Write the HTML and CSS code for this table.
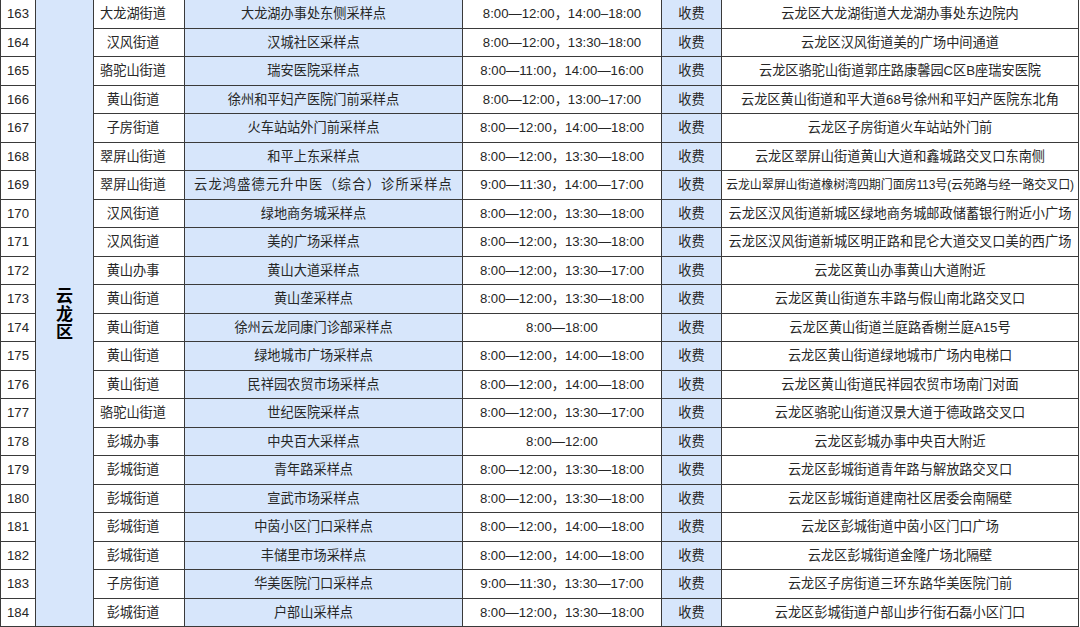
FILE: index.html
```html
<!DOCTYPE html>
<html lang="zh-CN">
<head>
<meta charset="utf-8">
<title>云龙区采样点</title>
<link rel="stylesheet" href="styles.css">
</head>
<body>
<div class="sheet">
  <div class="district"><span class="vtext">云龙区</span></div>

  <div class="c num">163</div><div class="c street">大龙湖街道</div><div class="c point">大龙湖办事处东侧采样点</div><div class="c time">8:00—12:00，14:00–18:00</div><div class="c fee">收费</div><div class="c addr">云龙区大龙湖街道大龙湖办事处东边院内</div>
  <div class="c num">164</div><div class="c street">汉风街道</div><div class="c point">汉城社区采样点</div><div class="c time">8:00—12:00，13:30–18:00</div><div class="c fee">收费</div><div class="c addr">云龙区汉风街道美的广场中间通道</div>
  <div class="c num">165</div><div class="c street">骆驼山街道</div><div class="c point">瑞安医院采样点</div><div class="c time">8:00—11:00，14:00—16:00</div><div class="c fee">收费</div><div class="c addr">云龙区骆驼山街道郭庄路康馨园C区B座瑞安医院</div>
  <div class="c num">166</div><div class="c street">黄山街道</div><div class="c point">徐州和平妇产医院门前采样点</div><div class="c time">8:00—12:00，13:00–17:00</div><div class="c fee">收费</div><div class="c addr">云龙区黄山街道和平大道68号徐州和平妇产医院东北角</div>
  <div class="c num">167</div><div class="c street">子房街道</div><div class="c point">火车站站外门前采样点</div><div class="c time">8:00—12:00，14:00—18:00</div><div class="c fee">收费</div><div class="c addr">云龙区子房街道火车站站外门前</div>
  <div class="c num">168</div><div class="c street">翠屏山街道</div><div class="c point">和平上东采样点</div><div class="c time">8:00—12:00，13:30—18:00</div><div class="c fee">收费</div><div class="c addr">云龙区翠屏山街道黄山大道和鑫城路交叉口东南侧</div>
  <div class="c num">169</div><div class="c street">翠屏山街道</div><div class="c point wide">云龙鸿盛德元升中医（综合）诊所采样点</div><div class="c time">9:00—11:30，14:00—17:00</div><div class="c fee">收费</div><div class="c addr tight">云龙山翠屏山街道橡树湾四期门面房113号(云苑路与经一路交叉口)</div>
  <div class="c num">170</div><div class="c street">汉风街道</div><div class="c point">绿地商务城采样点</div><div class="c time">8:00—12:00，13:30—18:00</div><div class="c fee">收费</div><div class="c addr">云龙区汉风街道新城区绿地商务城邮政储蓄银行附近小广场</div>
  <div class="c num">171</div><div class="c street">汉风街道</div><div class="c point">美的广场采样点</div><div class="c time">8:00—12:00，13:30—18:00</div><div class="c fee">收费</div><div class="c addr">云龙区汉风街道新城区明正路和昆仑大道交叉口美的西广场</div>
  <div class="c num">172</div><div class="c street">黄山办事</div><div class="c point">黄山大道采样点</div><div class="c time">8:00—12:00，13:30—17:00</div><div class="c fee">收费</div><div class="c addr">云龙区黄山办事黄山大道附近</div>
  <div class="c num">173</div><div class="c street">黄山街道</div><div class="c point">黄山垄采样点</div><div class="c time">8:00—12:00，13:30—18:00</div><div class="c fee">收费</div><div class="c addr">云龙区黄山街道东丰路与假山南北路交叉口</div>
  <div class="c num">174</div><div class="c street">黄山街道</div><div class="c point">徐州云龙同康门诊部采样点</div><div class="c time">8:00—18:00</div><div class="c fee">收费</div><div class="c addr">云龙区黄山街道兰庭路香榭兰庭A15号</div>
  <div class="c num">175</div><div class="c street">黄山街道</div><div class="c point">绿地城市广场采样点</div><div class="c time">8:00—12:00，14:00—18:00</div><div class="c fee">收费</div><div class="c addr">云龙区黄山街道绿地城市广场内电梯口</div>
  <div class="c num">176</div><div class="c street">黄山街道</div><div class="c point">民祥园农贸市场采样点</div><div class="c time">8:00—12:00，14:00—18:00</div><div class="c fee">收费</div><div class="c addr">云龙区黄山街道民祥园农贸市场南门对面</div>
  <div class="c num">177</div><div class="c street">骆驼山街道</div><div class="c point">世纪医院采样点</div><div class="c time">8:00—12:00，13:30—17:00</div><div class="c fee">收费</div><div class="c addr">云龙区骆驼山街道汉景大道于德政路交叉口</div>
  <div class="c num">178</div><div class="c street">彭城办事</div><div class="c point">中央百大采样点</div><div class="c time">8:00—12:00</div><div class="c fee">收费</div><div class="c addr">云龙区彭城办事中央百大附近</div>
  <div class="c num">179</div><div class="c street">彭城街道</div><div class="c point">青年路采样点</div><div class="c time">8:00—12:00，13:30—18:00</div><div class="c fee">收费</div><div class="c addr">云龙区彭城街道青年路与解放路交叉口</div>
  <div class="c num">180</div><div class="c street">彭城街道</div><div class="c point">宣武市场采样点</div><div class="c time">8:00—12:00，13:30—18:00</div><div class="c fee">收费</div><div class="c addr">云龙区彭城街道建南社区居委会南隔壁</div>
  <div class="c num">181</div><div class="c street">彭城街道</div><div class="c point">中茵小区门口采样点</div><div class="c time">8:00—12:00，14:00—18:00</div><div class="c fee">收费</div><div class="c addr">云龙区彭城街道中茵小区门口广场</div>
  <div class="c num">182</div><div class="c street">彭城街道</div><div class="c point">丰储里市场采样点</div><div class="c time">8:00—12:00，14:00—18:00</div><div class="c fee">收费</div><div class="c addr">云龙区彭城街道金隆广场北隔壁</div>
  <div class="c num">183</div><div class="c street">子房街道</div><div class="c point">华美医院门口采样点</div><div class="c time">9:00—11:30，13:30—17:00</div><div class="c fee">收费</div><div class="c addr">云龙区子房街道三环东路华美医院门前</div>
  <div class="c num">184</div><div class="c street">彭城街道</div><div class="c point">户部山采样点</div><div class="c time">8:00—12:00，13:30—18:00</div><div class="c fee">收费</div><div class="c addr">云龙区彭城街道户部山步行街石磊小区门口</div>
</div>
</body>
</html>
```

FILE: styles.css
```css
html, body {
  margin: 0;
  padding: 0;
  background: #ffffff;
}

.sheet {
  display: grid;
  grid-template-columns: 35px 58px 91px 278px 199px 60px 357px;
  grid-template-rows: repeat(22, 28.5px);
  border-left: 1px solid #3a3a3a;
  width: max-content;
  font-family: "Liberation Sans", "Noto Sans CJK SC", sans-serif;
  font-size: 13.2px;
  color: #262626;
}

.district {
  grid-column: 2;
  grid-row: 1 / 23;
  background: #d7e6fb;
  border-right: 1px solid #3a3a3a;
  border-bottom: 1px solid #3a3a3a;
  display: flex;
  align-items: center;
  justify-content: center;
  padding-top: 2px;
  box-sizing: border-box;
}

.vtext {
  writing-mode: vertical-rl;
  text-orientation: upright;
  font-family: "Noto Sans CJK SC", sans-serif;
  font-weight: 700;
  font-size: 17px;
  line-height: 1;
  letter-spacing: 1px;
  color: #000;
}

.c {
  box-sizing: border-box;
  border-right: 1px solid #3a3a3a;
  border-bottom: 1px solid #3a3a3a;
  display: flex;
  align-items: center;
  justify-content: center;
  white-space: nowrap;
  overflow: hidden;
  line-height: 1;
}

.num { grid-column: 1; }
.street { padding-right: 12px; }
.point { background: #d7e6fb; padding-right: 20px; }
.point.wide { padding-right: 0; letter-spacing: 1.2px; }
.fee { background: #d7e6fb; }
.addr.tight { font-size: 12px; letter-spacing: -0.1px; }
```
